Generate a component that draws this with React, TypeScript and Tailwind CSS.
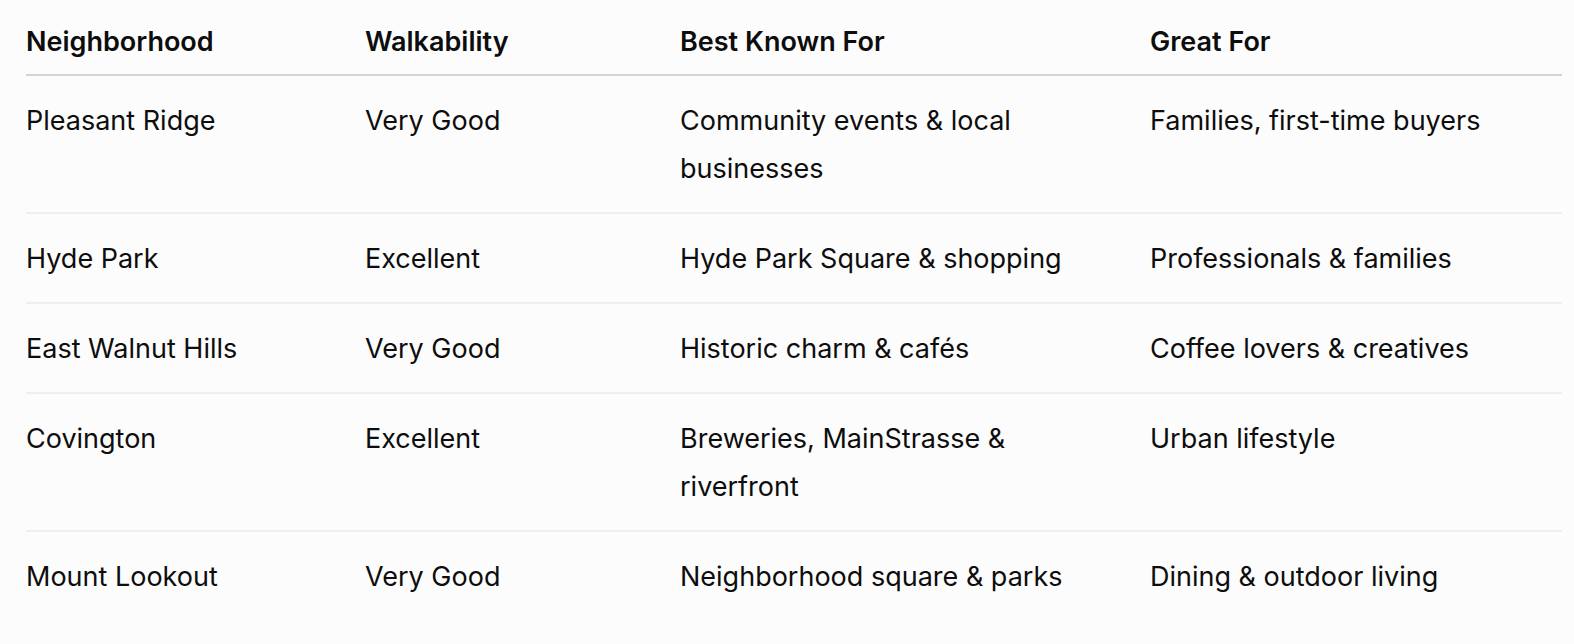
const rows = [
  { name: "Pleasant Ridge", walk: "Very Good", known: "Community events & local businesses", great: "Families, first-time buyers" },
  { name: "Hyde Park", walk: "Excellent", known: "Hyde Park Square & shopping", great: "Professionals & families" },
  { name: "East Walnut Hills", walk: "Very Good", known: "Historic charm & cafés", great: "Coffee lovers & creatives" },
  { name: "Covington", walk: "Excellent", known: "Breweries, MainStrasse & riverfront", great: "Urban lifestyle" },
  { name: "Mount Lookout", walk: "Very Good", known: "Neighborhood square & parks", great: "Dining & outdoor living" },
];

export default function App() {
  return (
    <div className="min-h-[644px] bg-[#fcfcfc] pl-[26px] pr-[12px] text-[27px] leading-[48px] text-[#0d0d0d] font-['Inter','Noto_Sans',sans-serif]">
      <table className="w-full table-fixed border-collapse text-left">
        <colgroup>
          <col className="w-[339px]" />
          <col className="w-[315px]" />
          <col className="w-[470px]" />
          <col />
        </colgroup>
        <thead>
          <tr className="border-b-2 border-[#d4d4d4]">
            <th className="pt-[18px] pb-[8px] pr-[28px] font-semibold">Neighborhood</th>
            <th className="pt-[18px] pb-[8px] pr-[28px] font-semibold">Walkability</th>
            <th className="pt-[18px] pb-[8px] pr-[28px] font-semibold">Best Known For</th>
            <th className="pt-[18px] pb-[8px] pr-[28px] font-semibold">Great For</th>
          </tr>
        </thead>
        <tbody>
          {rows.map((r, i) => (
            <tr key={r.name} className={i < rows.length - 1 ? "border-b-2 border-[#efefef]" : ""}>
              <td className="pt-[21px] pb-[19px] pr-[28px] align-top">{r.name}</td>
              <td className="pt-[21px] pb-[19px] pr-[28px] align-top">{r.walk}</td>
              <td className="pt-[21px] pb-[19px] pr-[28px] align-top">{r.known}</td>
              <td className="pt-[21px] pb-[19px] pr-[28px] align-top">{r.great}</td>
            </tr>
          ))}
        </tbody>
      </table>
    </div>
  );
}
